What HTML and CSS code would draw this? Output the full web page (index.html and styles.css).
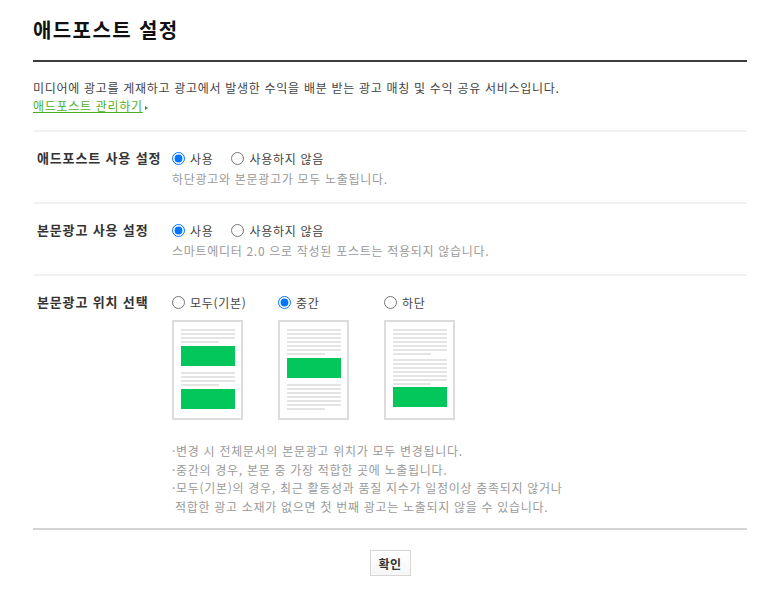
FILE: index.html
```html
<!DOCTYPE html>
<html lang="ko">
<head>
<meta charset="utf-8">
<title>애드포스트 설정</title>
<link rel="stylesheet" href="styles.css">
</head>
<body>
<div class="page">
  <h1 class="title">애드포스트 설정</h1>

  <div class="intro">
    <p class="intro-text">미디어에 광고를 게재하고 광고에서 발생한 수익을 배분 받는 광고 매칭 및 수익 공유 서비스입니다.</p>
    <a class="manage-link" href="#">애드포스트 관리하기</a><span class="arrow"></span>
  </div>

  <div class="row">
    <div class="row-label">애드포스트 사용 설정</div>
    <div class="row-body">
      <div class="opts">
        <label class="opt"><input type="radio" name="use" checked>사용</label>
        <label class="opt"><input type="radio" name="use">사용하지 않음</label>
      </div>
      <p class="sub">하단광고와 본문광고가 모두 노출됩니다.</p>
    </div>
  </div>

  <div class="row">
    <div class="row-label">본문광고 사용 설정</div>
    <div class="row-body">
      <div class="opts">
        <label class="opt"><input type="radio" name="body" checked>사용</label>
        <label class="opt"><input type="radio" name="body">사용하지 않음</label>
      </div>
      <p class="sub">스마트에디터 2.0 으로 작성된 포스트는 적용되지 않습니다.</p>
    </div>
  </div>

  <div class="row row-last">
    <div class="row-label">본문광고 위치 선택</div>
    <div class="row-body">
      <div class="pos">
        <div class="pos-item">
          <label class="opt"><input type="radio" name="pos">모두(기본)</label>
          <div class="thumb">
            <div class="ln"></div><div class="ln"></div><div class="ln"></div><div class="ln short"></div>
            <div class="ad ad-a"></div>
            <div class="ln gap6"></div><div class="ln"></div><div class="ln"></div><div class="ln short"></div>
            <div class="ad ad-a"></div>
          </div>
        </div>
        <div class="pos-item">
          <label class="opt"><input type="radio" name="pos" checked>중간</label>
          <div class="thumb">
            <div class="ln"></div><div class="ln"></div><div class="ln"></div><div class="ln"></div><div class="ln"></div><div class="ln"></div><div class="ln short"></div>
            <div class="ad ad-a"></div>
            <div class="ln gap6"></div><div class="ln"></div><div class="ln"></div><div class="ln"></div><div class="ln"></div><div class="ln"></div><div class="ln short"></div>
          </div>
        </div>
        <div class="pos-item">
          <label class="opt"><input type="radio" name="pos">하단</label>
          <div class="thumb">
            <div class="ln"></div><div class="ln"></div><div class="ln"></div><div class="ln"></div><div class="ln"></div><div class="ln"></div><div class="ln short"></div>
            <div class="ln gap4"></div><div class="ln"></div><div class="ln"></div><div class="ln"></div><div class="ln"></div><div class="ln"></div><div class="ln short"></div>
            <div class="ad ad-c"></div>
          </div>
        </div>
      </div>
      <ul class="notes">
        <li>·변경 시 전체문서의 본문광고 위치가 모두 변경됩니다.</li>
        <li>·중간의 경우, 본문 중 가장 적합한 곳에 노출됩니다.</li>
        <li>·모두(기본)의 경우, 최근 활동성과 품질 지수가 일정이상 충족되지 않거나<br>적합한 광고 소재가 없으면 첫 번째 광고는 노출되지 않을 수 있습니다.</li>
      </ul>
    </div>
  </div>

  <div class="footer">
    <button class="btn" type="button">확인</button>
  </div>
</div>
</body>
</html>
```

FILE: styles.css
```css
html, body {
  margin: 0;
  padding: 0;
  background: #fff;
}

body {
  font-family: "Noto Sans CJK KR", "Noto Sans", sans-serif;
  color: #333;
  letter-spacing: 0.7px;
}

.page {
  width: 714px;
  margin-left: 33px;
}

.title {
  margin: 0;
  padding: 16px 0;
  font-size: 20px;
  line-height: 28px;
  font-weight: bold;
  letter-spacing: 1.4px;
  color: #111;
  border-bottom: 2px solid #3c3c3c;
}

.intro {
  padding: 17px 0 15px;
  font-size: 12px;
  line-height: 18px;
  color: #444;
  border-bottom: 2px solid #f1f1f1;
}

.intro-text {
  margin: 0;
}

.manage-link {
  color: #4cb01e;
  text-decoration: underline;
}

.arrow {
  display: inline-block;
  width: 0;
  height: 0;
  margin-left: 2px;
  vertical-align: 1px;
  border-top: 2.5px solid transparent;
  border-bottom: 2.5px solid transparent;
  border-left: 3px solid #4b8a2a;
}

.row {
  display: flex;
  padding: 16px 0 12px;
  border-bottom: 2px solid #f1f1f1;
}

.row-last {
  border-bottom: none;
  padding-bottom: 12px;
}

.row-label {
  flex-shrink: 0;
  width: 139px;
  padding-left: 4px;
  box-sizing: border-box;
  font-size: 13px;
  font-weight: bold;
  letter-spacing: 0.85px;
  line-height: 20px;
  color: #333;
}

.row-body {
  flex: 1;
}

.opts {
  display: flex;
  align-items: center;
  height: 20px;
}

.opt {
  display: flex;
  align-items: center;
  height: 20px;
  font-size: 12px;
  color: #444;
  margin-right: 18px;
  white-space: nowrap;
}

.opt input {
  margin: 0 5px 0 0;
  width: 13px;
  height: 13px;
}

.sub {
  margin: 0;
  font-size: 12px;
  line-height: 22px;
  color: #9a9a9a;
}

.pos {
  display: grid;
  grid-template-columns: repeat(3, 71px);
  column-gap: 35px;
}

.pos-item {
  display: flex;
  flex-direction: column;
}

.pos-item .opt {
  margin-right: 0;
}

.thumb {
  margin-top: 8px;
  width: 71px;
  height: 100px;
  box-sizing: border-box;
  border: 2px solid #dcdcdc;
  padding: 7px 6px 0 7px;
  background: #fff;
  overflow: hidden;
}

.ln {
  height: 2px;
  margin-bottom: 2px;
  background: #e4e4e4;
}

.ln.short {
  width: 38px;
}

.ln.gap6 {
  margin-top: 6px;
}

.ln.gap4 {
  margin-top: 4px;
}

.ad {
  height: 20px;
  background: #03c75a;
}

.ad-a {
  margin-top: 3px;
}

.ad-c {
  margin-top: 2px;
}

.notes {
  list-style: none;
  margin: 22px 0 0;
  padding: 0 0 0 3px;
  font-size: 12px;
  line-height: 18.5px;
  color: #9a9a9a;
}

.notes li {
  text-indent: -3px;
}

.footer {
  border-top: 2px solid #d4d4d4;
  padding-top: 20px;
  display: flex;
  justify-content: center;
}

.btn {
  width: 41px;
  height: 26px;
  padding: 0;
  border: 1px solid #d6d6d6;
  background: linear-gradient(#ffffff, #f6f6f6);
  font-family: "Noto Sans CJK KR", sans-serif;
  font-size: 12px;
  font-weight: bold;
  letter-spacing: 0.5px;
  color: #333;
  cursor: pointer;
}
```
